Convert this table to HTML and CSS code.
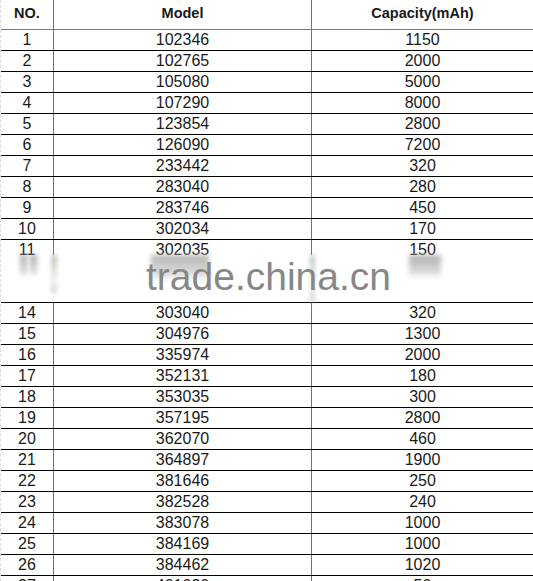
FILE: index.html
```html
<!DOCTYPE html>
<html>
<head>
<meta charset="utf-8">
<link rel="stylesheet" href="styles.css">
</head>
<body>
<div class="sheet">
  <div class="row head"><div class="c no">NO.</div><div class="c model">Model</div><div class="c cap">Capacity(mAh)</div></div>
  <div class="row"><div class="c no">1</div><div class="c model">102346</div><div class="c cap">1150</div></div>
  <div class="row"><div class="c no">2</div><div class="c model">102765</div><div class="c cap">2000</div></div>
  <div class="row"><div class="c no">3</div><div class="c model">105080</div><div class="c cap">5000</div></div>
  <div class="row"><div class="c no">4</div><div class="c model">107290</div><div class="c cap">8000</div></div>
  <div class="row"><div class="c no">5</div><div class="c model">123854</div><div class="c cap">2800</div></div>
  <div class="row"><div class="c no">6</div><div class="c model">126090</div><div class="c cap">7200</div></div>
  <div class="row"><div class="c no">7</div><div class="c model">233442</div><div class="c cap">320</div></div>
  <div class="row"><div class="c no">8</div><div class="c model">283040</div><div class="c cap">280</div></div>
  <div class="row"><div class="c no">9</div><div class="c model">283746</div><div class="c cap">450</div></div>
  <div class="row"><div class="c no">10</div><div class="c model">302034</div><div class="c cap">170</div></div>
  <div class="row"><div class="c no">11</div><div class="c model">302035</div><div class="c cap">150</div></div>
  <div class="row"><div class="c no"></div><div class="c model"></div><div class="c cap"></div></div>
  <div class="row"><div class="c no"></div><div class="c model"></div><div class="c cap"></div></div>
  <div class="row"><div class="c no">14</div><div class="c model">303040</div><div class="c cap">320</div></div>
  <div class="row"><div class="c no">15</div><div class="c model">304976</div><div class="c cap">1300</div></div>
  <div class="row"><div class="c no">16</div><div class="c model">335974</div><div class="c cap">2000</div></div>
  <div class="row"><div class="c no">17</div><div class="c model">352131</div><div class="c cap">180</div></div>
  <div class="row"><div class="c no">18</div><div class="c model">353035</div><div class="c cap">300</div></div>
  <div class="row"><div class="c no">19</div><div class="c model">357195</div><div class="c cap">2800</div></div>
  <div class="row"><div class="c no">20</div><div class="c model">362070</div><div class="c cap">460</div></div>
  <div class="row"><div class="c no">21</div><div class="c model">364897</div><div class="c cap">1900</div></div>
  <div class="row"><div class="c no">22</div><div class="c model">381646</div><div class="c cap">250</div></div>
  <div class="row"><div class="c no">23</div><div class="c model">382528</div><div class="c cap">240</div></div>
  <div class="row"><div class="c no">24</div><div class="c model">383078</div><div class="c cap">1000</div></div>
  <div class="row"><div class="c no">25</div><div class="c model">384169</div><div class="c cap">1000</div></div>
  <div class="row"><div class="c no">26</div><div class="c model">384462</div><div class="c cap">1020</div></div>
  <div class="row"><div class="c no">27</div><div class="c model">401030</div><div class="c cap">50</div></div>

  <div class="band">
    <div class="smear s-no1"></div>
    <div class="smear s-no2"></div>
    <div class="smear s-line1"></div>
    <div class="smear s-model"></div>
    <div class="smear s-line2"></div>
    <div class="smear s-cap"></div>
    <div class="mark">trade.china.cn</div>
  </div>
</div>
</body>
</html>
```

FILE: styles.css
```css
html, body {
  margin: 0;
  padding: 0;
  background: #fff;
}
.sheet {
  position: relative;
  width: 533px;
  height: 581px;
  overflow: hidden;
  font-family: "Liberation Sans", Arial, sans-serif;
  color: #1a1a1a;
  border-left: 1px dashed #dcdcdc;
  box-sizing: border-box;
}
.row {
  display: grid;
  grid-template-columns: 53px 258px 221px;
  height: 21px;
  border-bottom: 1px solid #000;
  box-sizing: border-box;
}
.row.head {
  height: 30px;
  border-bottom: 1px solid #6f8269;
  font-weight: bold;
}
.row.head .c {
  padding-bottom: 3px;
  font-size: 14.5px;
}
.c {
  display: flex;
  align-items: center;
  justify-content: center;
  font-size: 16px;
  line-height: 18px;
  box-sizing: border-box;
}
.c.no, .c.model {
  border-right: 1px solid #687e62;
}
.band {
  position: absolute;
  left: 0;
  top: 255px;
  width: 533px;
  height: 47px;
  background: #fff;
}
.smear {
  position: absolute;
  filter: blur(2.5px);
}
.s-no1 { left: 19px; top: 0; width: 7px; height: 20px; background: linear-gradient(#a8a8a8, #e4e4e4); }
.s-no2 { left: 29px; top: 0; width: 7px; height: 20px; background: linear-gradient(#a8a8a8, #e4e4e4); }
.s-line1 { left: 51px; top: 0; width: 4px; height: 38px; background: linear-gradient(#9aa996, #e8ece6 70%, #b6c0b2); }
.s-model {
  left: 150px; top: 0; width: 58px; height: 24px;
  background: linear-gradient(#b5b5b5, #d8d8d8 70%, #f2f2f2);
}
.s-line2 { left: 310px; top: 0; width: 3px; height: 47px; background: linear-gradient(#8fa08a, #dfe6dc 60%, #a8b6a4); }
.s-cap {
  left: 408px; top: 0; width: 32px; height: 22px;
  background: linear-gradient(#b0b0b0, #d6d6d6 70%, #f2f2f2);
}
.mark {
  position: absolute;
  left: 145px;
  top: 2px;
  font-family: "Liberation Sans", Arial, sans-serif;
  font-size: 39px;
  line-height: 39px;
  color: #878787;
  white-space: nowrap;
}
```
